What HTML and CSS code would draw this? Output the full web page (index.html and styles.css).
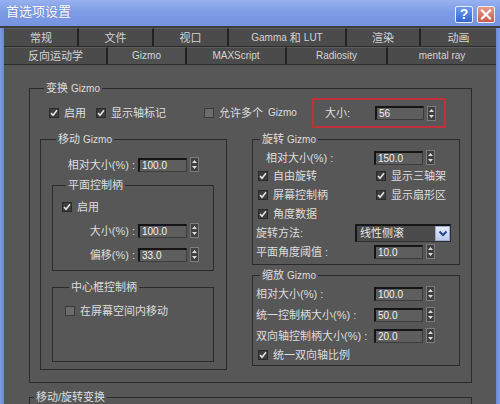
FILE: index.html
```html
<!DOCTYPE html>
<html lang="zh-CN">
<head>
<meta charset="utf-8">
<title>首选项设置</title>
<link rel="stylesheet" href="styles.css">
</head>
<body>
<div class="titlebar">
  <span class="title">首选项设置</span>
  <div class="tbtns">
    <span class="tbtn help">?</span>
    <span class="tbtn close"><svg width="12" height="11" viewBox="0 0 12 11"><path d="M2 1.5 L10 9.5 M10 1.5 L2 9.5" stroke="#fff" stroke-width="2.2" stroke-linecap="square"/></svg></span>
  </div>
</div>
<div class="client">
  <div class="tabs">
    <div class="tabrow row1">
      <div class="tab">常规</div>
      <div class="tab">文件</div>
      <div class="tab">视口</div>
      <div class="tab"><span class="en">Gamma</span> 和 <span class="en">LUT</span></div>
      <div class="tab">渲染</div>
      <div class="tab last">动画</div>
    </div>
    <div class="tabrow row2">
      <div class="tab">反向运动学</div>
      <div class="tab active"><span class="en">Gizmo</span></div>
      <div class="tab"><span class="en">MAXScript</span></div>
      <div class="tab"><span class="en">Radiosity</span></div>
      <div class="tab last"><span class="en">mental ray</span></div>
    </div>
  </div>
  <div class="panel">
    <fieldset class="grp outer">
      <legend>变换 <span class="en">Gizmo</span></legend>
      <div class="toprow">
        <label class="cb cb1"><span class="box on"><svg width="8" height="8" viewBox="0 0 8 8"><path d="M1 4 L3 6.3 L7 1.2" fill="none" stroke="#e6e6e6" stroke-width="1.5"/></svg></span>启用</label>
        <label class="cb cb2"><span class="box on"><svg width="8" height="8" viewBox="0 0 8 8"><path d="M1 4 L3 6.3 L7 1.2" fill="none" stroke="#e6e6e6" stroke-width="1.5"/></svg></span>显示轴标记</label>
        <label class="cb cb3"><span class="box off"></span>允许多个 <span class="en">Gizmo</span></label>
        <div class="hilite">
          <span class="hl-label">大小:</span>
          <span class="inp">56</span>
          <span class="spin"><svg width="7" height="13" viewBox="0 0 7 13"><path d="M1 5 L3.5 2 L6 5 Z M1 8 L3.5 11 L6 8 Z" fill="#dcdcdc"/></svg></span>
        </div>
      </div>
      <div class="cols">
        <fieldset class="grp move">
          <legend>移动 <span class="en">Gizmo</span></legend>
          <div class="frow">
            <span class="flabel w86">相对大小(%) :</span>
            <span class="inp">100.0</span>
            <span class="spin"><svg width="7" height="13" viewBox="0 0 7 13"><path d="M1 5 L3.5 2 L6 5 Z M1 8 L3.5 11 L6 8 Z" fill="#dcdcdc"/></svg></span>
          </div>
          <fieldset class="grp plane">
            <legend>平面控制柄</legend>
            <label class="cb"><span class="box on"><svg width="8" height="8" viewBox="0 0 8 8"><path d="M1 4 L3 6.3 L7 1.2" fill="none" stroke="#e6e6e6" stroke-width="1.5"/></svg></span>启用</label>
            <div class="frow r-size">
              <span class="flabel w76">大小(%) :</span>
              <span class="inp">100.0</span>
              <span class="spin"><svg width="7" height="13" viewBox="0 0 7 13"><path d="M1 5 L3.5 2 L6 5 Z M1 8 L3.5 11 L6 8 Z" fill="#dcdcdc"/></svg></span>
            </div>
            <div class="frow r-off">
              <span class="flabel w76">偏移(%) :</span>
              <span class="inp">33.0</span>
              <span class="spin"><svg width="7" height="13" viewBox="0 0 7 13"><path d="M1 5 L3.5 2 L6 5 Z M1 8 L3.5 11 L6 8 Z" fill="#dcdcdc"/></svg></span>
            </div>
          </fieldset>
          <fieldset class="grp center">
            <legend>中心框控制柄</legend>
            <label class="cb"><span class="box off"></span>在屏幕空间内移动</label>
          </fieldset>
        </fieldset>
        <div class="rcol">
          <fieldset class="grp rot">
            <legend>旋转 <span class="en">Gizmo</span></legend>
            <div class="frow indent">
              <span class="flabel rl w108">相对大小(%) :</span>
              <span class="inp">150.0</span>
              <span class="spin"><svg width="7" height="13" viewBox="0 0 7 13"><path d="M1 5 L3.5 2 L6 5 Z M1 8 L3.5 11 L6 8 Z" fill="#dcdcdc"/></svg></span>
            </div>
            <div class="cbgrid">
              <label class="cb"><span class="box on"><svg width="8" height="8" viewBox="0 0 8 8"><path d="M1 4 L3 6.3 L7 1.2" fill="none" stroke="#e6e6e6" stroke-width="1.5"/></svg></span>自由旋转</label>
              <label class="cb"><span class="box on"><svg width="8" height="8" viewBox="0 0 8 8"><path d="M1 4 L3 6.3 L7 1.2" fill="none" stroke="#e6e6e6" stroke-width="1.5"/></svg></span>显示三轴架</label>
              <label class="cb"><span class="box on"><svg width="8" height="8" viewBox="0 0 8 8"><path d="M1 4 L3 6.3 L7 1.2" fill="none" stroke="#e6e6e6" stroke-width="1.5"/></svg></span>屏幕控制柄</label>
              <label class="cb"><span class="box on"><svg width="8" height="8" viewBox="0 0 8 8"><path d="M1 4 L3 6.3 L7 1.2" fill="none" stroke="#e6e6e6" stroke-width="1.5"/></svg></span>显示扇形区</label>
              <label class="cb"><span class="box on"><svg width="8" height="8" viewBox="0 0 8 8"><path d="M1 4 L3 6.3 L7 1.2" fill="none" stroke="#e6e6e6" stroke-width="1.5"/></svg></span>角度数据</label>
            </div>
            <div class="frow">
              <span class="flabel rl w99">旋转方法:</span>
              <span class="dd"><span class="dd-text">线性侧滚</span><span class="dd-btn"><svg width="10" height="7" viewBox="0 0 10 7"><path d="M1.5 1.5 L5 5 L8.5 1.5" fill="none" stroke="#24468f" stroke-width="2"/></svg></span></span>
            </div>
            <div class="frow">
              <span class="flabel rl w118">平面角度阈值 :</span>
              <span class="inp">10.0</span>
              <span class="spin"><svg width="7" height="13" viewBox="0 0 7 13"><path d="M1 5 L3.5 2 L6 5 Z M1 8 L3.5 11 L6 8 Z" fill="#dcdcdc"/></svg></span>
            </div>
          </fieldset>
          <fieldset class="grp scale">
            <legend>缩放 <span class="en">Gizmo</span></legend>
            <div class="frow">
              <span class="flabel rl w118">相对大小(%) :</span>
              <span class="inp">100.0</span>
              <span class="spin"><svg width="7" height="13" viewBox="0 0 7 13"><path d="M1 5 L3.5 2 L6 5 Z M1 8 L3.5 11 L6 8 Z" fill="#dcdcdc"/></svg></span>
            </div>
            <div class="frow">
              <span class="flabel rl w118">统一控制柄大小(%) :</span>
              <span class="inp">50.0</span>
              <span class="spin"><svg width="7" height="13" viewBox="0 0 7 13"><path d="M1 5 L3.5 2 L6 5 Z M1 8 L3.5 11 L6 8 Z" fill="#dcdcdc"/></svg></span>
            </div>
            <div class="frow">
              <span class="flabel rl w118">双向轴控制柄大小(%) :</span>
              <span class="inp">20.0</span>
              <span class="spin"><svg width="7" height="13" viewBox="0 0 7 13"><path d="M1 5 L3.5 2 L6 5 Z M1 8 L3.5 11 L6 8 Z" fill="#dcdcdc"/></svg></span>
            </div>
            <label class="cb sc-cb"><span class="box on"><svg width="8" height="8" viewBox="0 0 8 8"><path d="M1 4 L3 6.3 L7 1.2" fill="none" stroke="#e6e6e6" stroke-width="1.5"/></svg></span>统一双向轴比例</label>
          </fieldset>
        </div>
      </div>
    </fieldset>
    <fieldset class="grp bottom">
      <legend>移动/旋转变换</legend>
    </fieldset>
  </div>
</div>
</body>
</html>
```
FILE: styles.css
```css
* { box-sizing: border-box; }
html, body { margin: 0; padding: 0; }
body {
  width: 500px;
  height: 404px;
  overflow: hidden;
  background: linear-gradient(90deg, #7b9ae6, #6989d9 4px, #6989d9 496px, #7b9ae6);
  font-family: "Liberation Sans", "Noto Sans CJK SC", sans-serif;
  font-size: 11px;
  line-height: 14px;
  color: #dedede;
}
.en { font-size: 10px; }

/* title bar */
.titlebar {
  height: 28px;
  display: flex;
  align-items: center;
  padding: 0 5px 2px 6px;
  background: linear-gradient(#97b1f0, #7f9ce6 45%, #7593e0);
  border-bottom: 2px solid #3d3d3d;
}
.title {
  font-size: 13px;
  color: #ffffff;
  text-shadow: 0 0 1px rgba(40, 60, 120, 0.5);
}
.tbtns { margin-left: auto; display: flex; gap: 4px; margin-top: 4px; }
.tbtn {
  width: 18px;
  height: 17px;
  display: flex;
  align-items: center;
  justify-content: center;
  border: 1px solid #e9eefb;
  border-radius: 2px;
  color: #fff;
}
.help {
  background: linear-gradient(#6b9af2, #3366d2);
  font-weight: bold;
  font-size: 14px;
  font-family: "Liberation Sans", sans-serif;
}
.close { background: linear-gradient(#e79a8c, #c95a4c); }

/* client area */
.client {
  margin: 0 4px;
  height: 376px;
  overflow: hidden;
  background: #575757;
}
.tabs { background: #4a4a4a; }
.tabrow {
  display: grid;
  padding-left: 1px;
  border-bottom: 1px solid #2c2c2c;
}
.row1 { height: 19px; grid-template-columns: 74px 75px 75px 118px 74px 1fr; }
.row2 { height: 18px; grid-template-columns: 103px 79px 100px 101px 1fr; }
.tab {
  display: flex;
  align-items: center;
  justify-content: center;
  gap: 3px;
  color: #d4d4d4;
  border-right: 2px solid #222;
  border-top: 1px solid #5c5c5c;
  background: #4b4b4b;
}
.tab.last { border-right: 0; }
.tab.active { background: #505050; }

.panel { padding: 16px 24px 0 25px; }

/* group boxes */
.grp {
  margin: 0;
  min-width: 0;
  border: 1px solid #2b2b2b;
}
.grp > legend {
  padding: 0 2px;
  margin-left: 4px;
  line-height: 14px;
  color: #dedede;
}
.outer { padding: 2px 11px 12px 10px; }

.toprow { display: flex; align-items: center; height: 30px; }
.cb { display: inline-flex; align-items: center; gap: 5px; height: 14px; white-space: nowrap; }
.cb1 { margin-left: 9px; }
.cb2 { margin-left: 10px; }
.cb3 { margin-left: 38px; }
.box {
  width: 10px;
  height: 10px;
  flex: none;
  display: flex;
  align-items: center;
  justify-content: center;
  border: 1px solid #2a2a2a;
}
.box.on { background: #3d3d3d; }
.box.off { background: #6c6c6c; border-color: #3a3a3a; }

.hilite {
  margin-left: auto;
  margin-right: 14px;
  width: 134px;
  height: 30px;
  border: 2px solid #c2303b;
  display: flex;
  align-items: center;
  padding: 0 8px 0 11px;
}
.hl-label { flex: 1; }

/* inputs */
.inp {
  width: 49px;
  height: 14px;
  flex: none;
  display: flex;
  align-items: center;
  padding-left: 2px;
  font-size: 10px;
  line-height: 11px;
  color: #f2f2f2;
  background: #5e5e5e;
  border-top: 2px solid #151515;
  border-left: 2px solid #151515;
  border-right: 1px solid #3c3c3c;
  border-bottom: 1px solid #3c3c3c;
}
.spin {
  width: 9px;
  height: 15px;
  flex: none;
  margin-left: 3px;
  display: flex;
  align-items: center;
  justify-content: center;
  background: #404040;
  border: 1px solid #7c7c7c;
}

.frow { display: flex; align-items: center; height: 15px; }
.flabel { flex: none; text-align: right; padding-right: 3px; white-space: nowrap; }
.flabel.rl { text-align: left; padding-right: 0; }
.w76 { width: 76px; }
.w86 { width: 86px; }
.w99 { width: 99px; }
.w108 { width: 108px; }
.w118 { width: 118px; }

.cols { display: flex; align-items: flex-start; gap: 25px; margin-top: 4px; }

.move { width: 187px; padding: 10px 12px 7px 11px; }
.plane { margin-top: 6px; padding: 8px 0 8px 9px; }
.plane .r-size { margin-top: 9px; }
.plane .r-off { margin-top: 9px; }
.center { margin-top: 9px; height: 82px; padding: 10px 0 0 12px; }

.rcol { width: 208px; display: flex; flex-direction: column; gap: 3px; }
.rot { display: flex; flex-direction: column; gap: 4px; padding: 3px 4px 5px 3px; }
.rot .indent { padding-left: 10px; }
.cbgrid {
  display: grid;
  grid-template-columns: 118px 1fr;
  row-gap: 5px;
  padding-left: 2px;
}
.dd {
  width: 96px;
  height: 18px;
  display: flex;
  background: #4b4b4b;
  border-top: 2px solid #161616;
  border-left: 2px solid #161616;
  border-right: 1px solid #2e2e2e;
  border-bottom: 1px solid #2e2e2e;
}
.dd-text { flex: 1; padding-left: 3px; line-height: 15px; color: #e6e6e6; }
.dd-btn {
  width: 15px;
  display: flex;
  align-items: center;
  justify-content: center;
  background: linear-gradient(#e6ecfa, #bccbec);
  border: 1px solid #9aaad0;
}

.scale { display: flex; flex-direction: column; gap: 6px; padding: 3px 4px 3px 3px; }
.sc-cb { margin-left: 2px; margin-top: -1px; }

.bottom { margin-top: 7px; height: 16px; padding: 0; border-bottom: 0; }
```
